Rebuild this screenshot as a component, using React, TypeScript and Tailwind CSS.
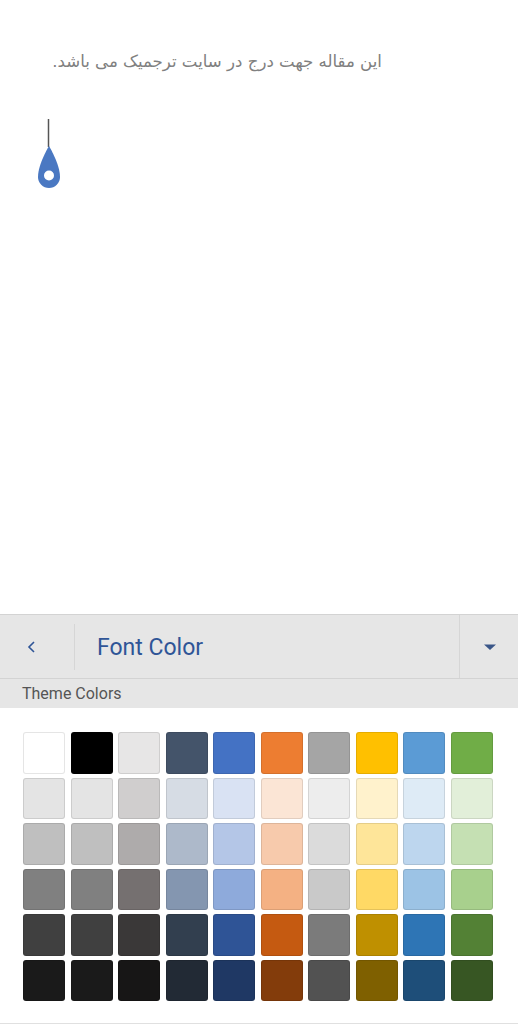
const themeColors: string[][] = [
  ["#ffffff", "#000000", "#e7e6e6", "#44546a", "#4472c4", "#ed7d31", "#a5a5a5", "#ffc000", "#5b9bd5", "#70ad47"],
  ["#e4e4e4", "#e4e4e4", "#d0cece", "#d6dce4", "#d9e2f3", "#fbe5d5", "#ededed", "#fff2cc", "#deebf6", "#e2efd9"],
  ["#bfbfbf", "#bfbfbf", "#aeabab", "#adb9ca", "#b4c6e7", "#f7caac", "#dbdbdb", "#fee599", "#bdd6ee", "#c5e0b3"],
  ["#808080", "#808080", "#757070", "#8496b0", "#8eaadb", "#f4b183", "#c9c9c9", "#ffd965", "#9cc3e5", "#a8d08d"],
  ["#404040", "#404040", "#3a3838", "#323f4f", "#2f5496", "#c55a11", "#7b7b7b", "#bf9000", "#2e75b5", "#538135"],
  ["#1a1a1a", "#1a1a1a", "#171616", "#222a35", "#1f3864", "#833c0b", "#525252", "#7f6000", "#1e4e79", "#375623"],
];

function Cursor() {
  return (
    <svg width="24" height="70" viewBox="37 117 24 70" className="block">
      <line x1="48.5" y1="118" x2="48.5" y2="146" stroke="#555" strokeWidth="1.5" />
      <path
        d="M49 145 C49 145 38 163 38 176 A11 11 0 0 0 60 176 C60 163 49 145 49 145 Z"
        fill="#4a78c2"
      />
      <circle cx="49" cy="174.5" r="5" fill="#fff" />
    </svg>
  );
}

export default function App() {
  return (
    <div className="h-[1024px] flex flex-col bg-white font-['Roboto',sans-serif]">
      {/* Document */}
      <div className="flex-1 pt-[51px]">
        <p
          dir="rtl"
          className="pr-[136px] text-[16.6px] leading-[22px] text-[#808080] font-['DejaVu_Sans',sans-serif]"
        >
          این مقاله جهت درج در سایت ترجمیک می باشد.
        </p>
        <div className="ml-[37px] mt-[45px]">
          <Cursor />
        </div>
      </div>

      {/* Font color panel */}
      <div className="border-t border-[#d3d3d3]">
        <div className="h-[63px] bg-[#e6e6e6] flex items-center">
          <div className="w-[74px] flex justify-center items-center">
            <svg width="10" height="14" viewBox="0 0 10 14" className="-ml-[12px]">
              <polyline points="8,2 3,7 8,12" fill="none" stroke="#2f5597" strokeWidth="1.6" />
            </svg>
          </div>
          <div className="w-px h-[46px] bg-[#d6d6d6]" />
          <div className="flex-1 pl-[22px] text-[23px] text-[#2f5597] pt-[3px]">Font Color</div>
          <div className="w-px self-stretch bg-[#d6d6d6]" />
          <div className="w-[58px] flex justify-center items-center">
            <svg width="14" height="8" viewBox="0 0 14 8" className="ml-[2px]">
              <polygon points="1,1.5 13,1.5 7,7" fill="#3a5688" />
            </svg>
          </div>
        </div>
        <div className="border-t border-[#d3d3d3] h-[30px] bg-[#e6e6e6] pl-[22px] flex items-center text-[16px] text-[#555]">
          Theme Colors
        </div>
        <div className="h-[315px] pt-[24px] pl-[23px]">
          <div className="grid grid-cols-[repeat(10,42px)] gap-x-[5.5px] gap-y-[4px]">
            {themeColors.flat().map((c, i) => (
              <div
                key={i}
                className="h-[41.5px] rounded-[3px] border border-black/10"
                style={{ backgroundColor: c }}
              />
            ))}
          </div>
        </div>
        <div className="h-px bg-[#e0e0e0]" />
      </div>
    </div>
  );
}
